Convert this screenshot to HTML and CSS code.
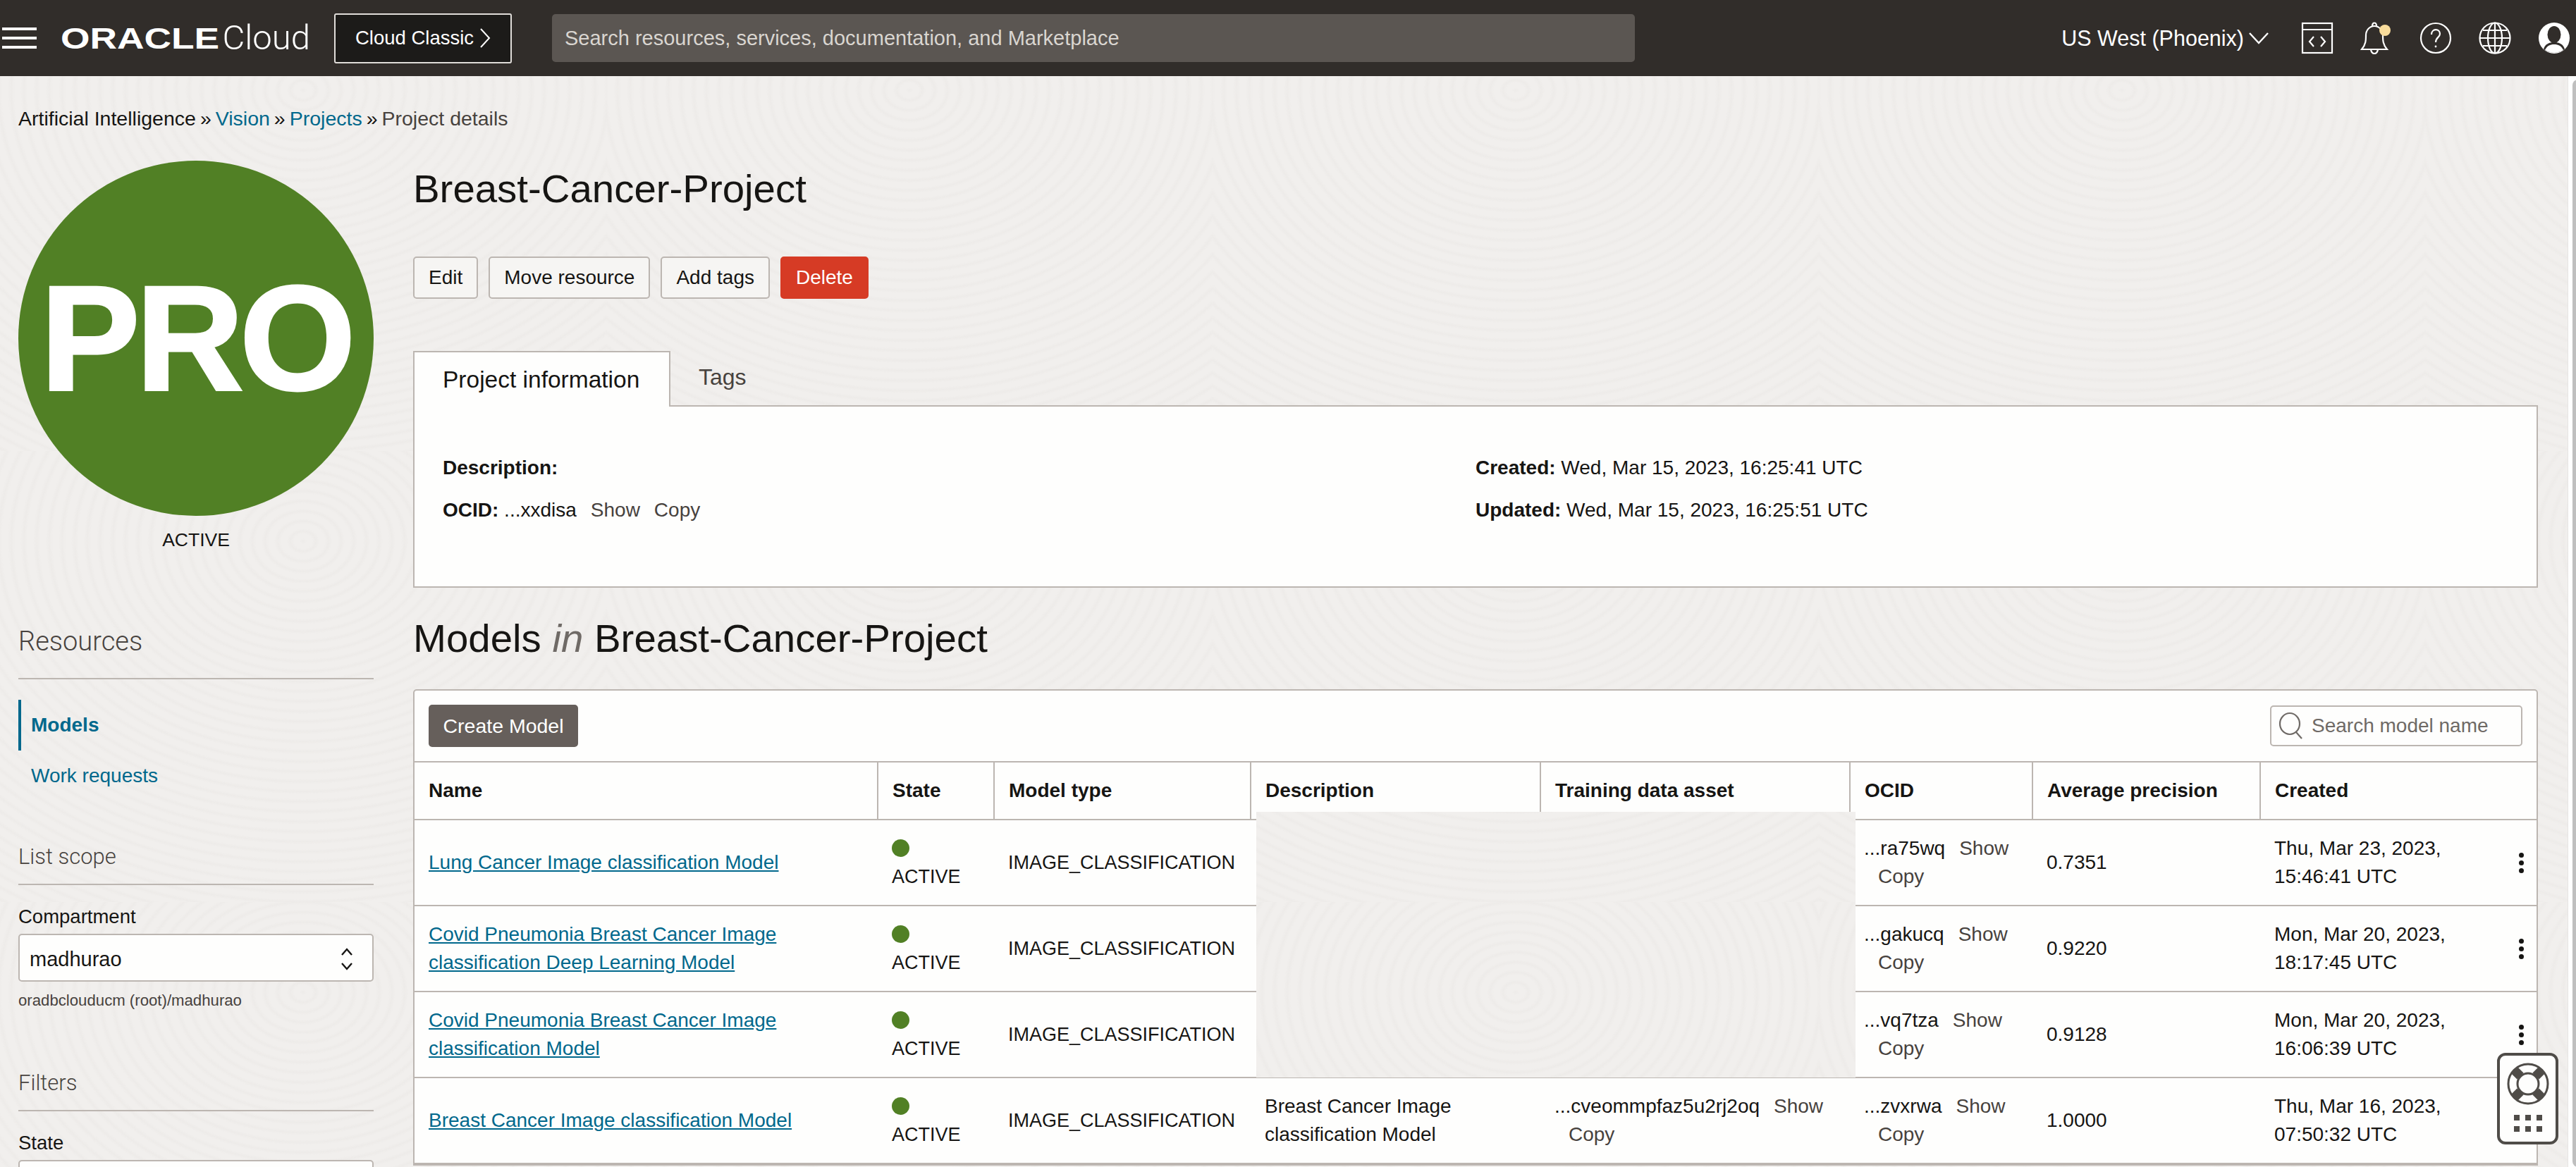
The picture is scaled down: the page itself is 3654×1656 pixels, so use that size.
FILE: index.html
```html
<!DOCTYPE html>
<html lang="en">
<head>
    <meta charset="UTF-8">
    <title>Breast-Cancer-Project | Vision</title>
    <link rel="stylesheet" href="styles.css">
</head>
<body>
    <header class="topbar">
        <div class="burger"><span></span><span></span><span></span></div>
        <div class="logo"><span class="logo-oracle">ORACLE</span><span class="logo-cloud">Cloud</span></div>
        <a class="classic">Cloud Classic
            <svg width="16" height="30" viewBox="0 0 16 30"><path d="M2 2l12 13L2 28" fill="none" stroke="#fff" stroke-width="2"/></svg>
        </a>
        <div class="search">Search resources, services, documentation, and Marketplace</div>
        <div class="region">US West (Phoenix)
            <svg width="30" height="18" viewBox="0 0 30 18"><path d="M2 2l13 14L28 2" fill="none" stroke="#fff" stroke-width="2.4"/></svg>
        </div>
        <div class="top-icons">
            <svg width="46" height="46" viewBox="0 0 46 46" fill="none" stroke="#fff" stroke-width="2.2"><rect x="2" y="2" width="42" height="42"/><path d="M2 11h42M18 21l-6 7 6 7M28 21l6 7-6 7"/></svg>
            <svg width="46" height="48" viewBox="0 0 46 48" fill="none" stroke="#fff" stroke-width="2.2"><path d="M2 40c6-7 6-13 6-20 0-7 5-13 12-13s12 6 12 13c0 7 0 13 6 20zM17 7c0-6 6-6 6 0M15 40c1 8 9 8 10 0"/><ellipse cx="35" cy="13" rx="8" ry="8" fill="#f8dc9b" stroke="none"/></svg>
            <svg width="46" height="46" viewBox="0 0 46 46" fill="none" stroke="#fff" stroke-width="2.2"><circle cx="23" cy="23" r="21"/><path d="M17 18c0-9 12-9 12-1 0 5-6 5-6 12"/><circle cx="23" cy="35" r="1.4" fill="#fff" stroke="none"/></svg>
            <svg width="46" height="46" viewBox="0 0 46 46" fill="none" stroke="#fff" stroke-width="2.2"><circle cx="23" cy="23" r="21.5"/><ellipse cx="23" cy="23" rx="10" ry="21.5"/><path d="M23 2v42M2 23h42M6 12h34M6 34h34"/></svg>
            <svg width="46" height="46" viewBox="0 0 46 46"><circle cx="23" cy="23" r="22" fill="#fff"/><ellipse cx="23" cy="18" rx="9.5" ry="12" fill="#312d2a"/><path d="M8 39c2-8 8-9 12-10h6c4 1 10 2 12 10-8 6-22 6-30 0z" fill="#312d2a"/><path d="M10 40c3-6 7-8 13-8s10 2 13 8c-8 5-18 5-26 0z" fill="#fff"/></svg>
        </div>
    </header>

    <nav class="crumbs">
        <span class="crumb-dark">Artificial Intelligence</span><span class="sep">»</span><a>Vision</a><span class="sep">»</span><a>Projects</a><span class="sep">»</span><span>Project details</span>
    </nav>

    <div class="page">
        <aside class="side">
            <div class="avatar">PRO</div>
            <div class="avatar-state">ACTIVE</div>

            <h3 class="side-title">Resources</h3>
            <ul class="side-nav">
                <li class="active">Models</li>
                <li>Work requests</li>
            </ul>

            <h4 class="side-sub">List scope</h4>
            <label class="field-label">Compartment</label>
            <div class="select">madhurao
                <svg width="20" height="36" viewBox="0 0 20 36" fill="none" stroke="#161513" stroke-width="2.4"><path d="M3 12l7-8 7 8M3 24l7 8 7-8"/></svg>
            </div>
            <div class="field-note">oradbclouducm (root)/madhurao</div>

            <h4 class="side-sub filters">Filters</h4>
            <label class="field-label">State</label>
            <div class="select"></div>
        </aside>

        <main class="content">
            <h1 class="title">Breast-Cancer-Project</h1>
            <div class="actions">
                <button class="btn">Edit</button>
                <button class="btn">Move resource</button>
                <button class="btn">Add tags</button>
                <button class="btn btn-red">Delete</button>
            </div>

            <div class="tabs">
                <div class="tab on">Project information</div>
                <div class="tab">Tags</div>
            </div>
            <section class="info">
                <div><b>Description:</b></div>
                <div><b>Created:</b> Wed, Mar 15, 2023, 16:25:41 UTC</div>
                <div><b>OCID:</b> ...xxdisa<a class="mini">Show</a><a class="mini">Copy</a></div>
                <div><b>Updated:</b> Wed, Mar 15, 2023, 16:25:51 UTC</div>
            </section>

            <h2 class="models-title">Models <i>in</i> Breast-Cancer-Project</h2>

            <section class="models">
                <div class="toolbar">
                    <button class="btn-create">Create Model</button>
                    <div class="table-search">
                        <svg width="36" height="40" viewBox="0 0 36 40" fill="none" stroke="#6f6a66" stroke-width="2.2"><ellipse cx="16" cy="17" rx="14" ry="15"/><path d="M25 29l8 9"/></svg>
                        Search model name
                    </div>
                </div>
                <table>
                    <colgroup>
                        <col class="c-name"><col class="c-state"><col class="c-type"><col class="c-desc"><col class="c-asset"><col class="c-ocid"><col class="c-prec"><col class="c-date">
                    </colgroup>
                    <thead>
                        <tr><th>Name</th><th>State</th><th>Model type</th><th>Description</th><th>Training data asset</th><th>OCID</th><th>Average precision</th><th>Created</th></tr>
                    </thead>
                    <tbody>
                        <tr>
                            <td><a class="link">Lung Cancer Image classification Model</a></td>
                            <td class="caps"><span class="dot"></span><br>ACTIVE</td>
                            <td class="caps">IMAGE_CLASSIFICATION</td>
                            <td></td><td></td>
                            <td>...ra75wq<a class="mini">Show</a> <a class="mini">Copy</a></td>
                            <td>0.7351</td>
                            <td><div class="date-cell"><span>Thu, Mar 23, 2023,<br>15:46:41 UTC</span><span class="kebab"><i></i><i></i><i></i></span></div></td>
                        </tr>
                        <tr>
                            <td><a class="link">Covid Pneumonia Breast Cancer Image<br>classification Deep Learning Model</a></td>
                            <td class="caps"><span class="dot"></span><br>ACTIVE</td>
                            <td class="caps">IMAGE_CLASSIFICATION</td>
                            <td></td><td></td>
                            <td>...gakucq<a class="mini">Show</a> <a class="mini">Copy</a></td>
                            <td>0.9220</td>
                            <td><div class="date-cell"><span>Mon, Mar 20, 2023,<br>18:17:45 UTC</span><span class="kebab"><i></i><i></i><i></i></span></div></td>
                        </tr>
                        <tr>
                            <td><a class="link">Covid Pneumonia Breast Cancer Image<br>classification Model</a></td>
                            <td class="caps"><span class="dot"></span><br>ACTIVE</td>
                            <td class="caps">IMAGE_CLASSIFICATION</td>
                            <td></td><td></td>
                            <td>...vq7tza<a class="mini">Show</a> <a class="mini">Copy</a></td>
                            <td>0.9128</td>
                            <td><div class="date-cell"><span>Mon, Mar 20, 2023,<br>16:06:39 UTC</span><span class="kebab"><i></i><i></i><i></i></span></div></td>
                        </tr>
                        <tr>
                            <td><a class="link">Breast Cancer Image classification Model</a></td>
                            <td class="caps"><span class="dot"></span><br>ACTIVE</td>
                            <td class="caps">IMAGE_CLASSIFICATION</td>
                            <td>Breast Cancer Image<br>classification Model</td>
                            <td>...cveommpfaz5u2rj2oq<a class="mini">Show</a> <a class="mini">Copy</a></td>
                            <td>...zvxrwa<a class="mini">Show</a> <a class="mini">Copy</a></td>
                            <td>1.0000</td>
                            <td><div class="date-cell"><span>Thu, Mar 16, 2023,<br>07:50:32 UTC</span></div></td>
                        </tr>
                    </tbody>
                </table>
                <div class="blanked"></div>
            </section>
        </main>
    </div>

    <div class="help">
        <svg width="62" height="62" viewBox="0 0 62 62" fill="none" stroke="#4f4c48">
            <circle cx="31" cy="31" r="28" stroke-width="3"/>
            <path d="M20 20L11 11M42 20l9-9M20 42l-9 9M42 42l9 9" stroke-width="13"/>
            <circle cx="31" cy="31" r="15" fill="#fefefd" stroke-width="3"/>
        </svg>
        <div class="help-grid"><i></i><i></i><i></i><i></i><i></i><i></i></div>
    </div>
    <div class="scroll-track"><div class="scroll-thumb"></div></div>
</body>
</html>
```

FILE: styles.css
```css
:root {
    --texture: repeating-radial-gradient(ellipse 380px 300px at 50% 20%, rgba(110, 100, 90, 0.022) 0, transparent 5px, transparent 13px, rgba(110, 100, 90, 0.022) 18px);
}

* {
    box-sizing: border-box;
}

html, body {
    height: 100%;
}

body {
    margin: 0;
    height: 1656px;
    overflow: hidden;
    position: relative;
    color: #161513;
    font-family: "Liberation Sans", Arial, sans-serif;
    font-size: 28px;
    line-height: 40px;
    background-color: #f1efed;
    background-image: var(--texture);
    background-size: 860px 640px;
    background-attachment: fixed;
}

a {
    color: #00688c;
}

/* top bar */
.topbar {
    height: 108px;
    background: #312d2a;
    color: #fff;
    display: flex;
    align-items: center;
    padding: 0 8px 0 3px;
}

.burger {
    width: 49px;
    display: flex;
    flex-direction: column;
    gap: 9px;
}

.burger span {
    height: 4px;
    background: #fff;
}

.logo {
    margin-left: 34px;
    width: 354px;
    display: flex;
    align-items: center;
    white-space: nowrap;
}

.logo-oracle {
    font-size: 43px;
    font-weight: bold;
    line-height: 44px;
    width: 233px;
    transform: scaleX(1.24);
    transform-origin: left center;
}

.logo-cloud {
    font-family: Roboto, "Liberation Sans", sans-serif;
    font-weight: 300;
    font-size: 49px;
}

.classic {
    width: 252px;
    height: 71px;
    margin-left: 34px;
    background: #1c1b19;
    border: 2px solid #e0ddd9;
    border-radius: 3px;
    color: #fff;
    font-size: 27.5px;
    display: flex;
    align-items: center;
    justify-content: center;
    gap: 8px;
}

.search {
    width: 1536px;
    height: 68px;
    margin-left: 57px;
    padding-left: 18px;
    background: #5b5652;
    border-radius: 5px;
    color: #d9d5d0;
    font-size: 29px;
    line-height: 68px;
}

.region {
    margin-left: auto;
    font-size: 30.5px;
    display: flex;
    align-items: center;
    gap: 6px;
}

.top-icons {
    margin-left: 45px;
    display: flex;
    align-items: center;
    gap: 38px;
}

.top-icons svg {
    display: block;
}

/* breadcrumb */
.crumbs {
    padding: 40px 0 0 26px;
    height: 120px;
    color: #47423e;
    font-size: 28.5px;
}

.crumb-dark {
    color: #161513;
}

.sep {
    margin: 0 6px;
    color: #161513;
}

/* columns */
.page {
    display: flex;
    gap: 56px;
    padding: 0 54px 0 26px;
}

.side {
    width: 504px;
    flex: none;
}

.avatar {
    width: 504px;
    height: 504px;
    border-radius: 50%;
    background: #518025;
    color: #fff;
    font-size: 212px;
    font-weight: bold;
    letter-spacing: -6px;
    line-height: 504px;
    text-align: center;
    -webkit-text-stroke: 3px #fff;
}

.avatar-state {
    margin-top: 14px;
    text-align: center;
    font-size: 26.5px;
}

.side-title {
    margin: 99px 0 0;
    height: 79px;
    border-bottom: 2px solid #bcb6b1;
    font-family: Roboto, "Liberation Sans", sans-serif;
    font-size: 38px;
    font-weight: 300;
    line-height: 50px;
    color: #47423e;
}

.side-nav {
    list-style: none;
    margin: 29px 0 0;
    padding: 0;
}

.side-nav li {
    height: 72px;
    padding-left: 18px;
    line-height: 72px;
    font-size: 28px;
    color: #00688c;
}

.side-nav .active {
    border-left: 4px solid #00688c;
    padding-left: 14px;
    font-weight: bold;
}

.side-sub {
    margin: 57px 0 0;
    height: 62px;
    border-bottom: 2px solid #bcb6b1;
    font-family: Roboto, "Liberation Sans", sans-serif;
    font-size: 31px;
    font-weight: 300;
    line-height: 44px;
    color: #47423e;
}

.side-sub.filters {
    margin-top: 80px;
}

.field-label {
    display: block;
    margin-top: 25px;
    font-size: 27.5px;
}

.select {
    height: 68px;
    margin-top: 4px;
    padding: 3px 26px 0 14px;
    background: #fefefd;
    border: 2px solid #bcb6b1;
    border-radius: 5px;
    display: flex;
    align-items: center;
    justify-content: space-between;
    font-size: 29px;
}

.field-note {
    margin-top: 12px;
    font-size: 22.2px;
    line-height: 30px;
    color: #47423e;
}

/* main column */
.content {
    flex: 1;
    min-width: 0;
}

.title {
    margin: 0;
    font-size: 56.4px;
    font-weight: normal;
    line-height: 80px;
}

.actions {
    margin-top: 56px;
    display: flex;
    gap: 15px;
}

.btn {
    height: 60px;
    padding: 0 20px;
    background: #f6f5f3;
    border: 2px solid #bcb6b1;
    border-radius: 5px;
    color: #161513;
    font-family: inherit;
    font-size: 28px;
}

.btn-red {
    background: #d63b25;
    border-color: #d63b25;
    color: #fff;
}

.tabs {
    margin-top: 74px;
    height: 79px;
    display: flex;
}

.tab {
    padding: 0 40px;
    font-size: 32px;
    line-height: 74px;
    color: #47423e;
    border-bottom: 2px solid #bcb6b1;
}

.tab.on {
    width: 365px;
    padding-top: 2px;
    background: #fefefd;
    border: 2px solid #bcb6b1;
    border-bottom: 0;
    color: #161513;
    font-size: 33.5px;
    white-space: nowrap;
}

.tabs .tab:last-child {
    flex: 1;
}

.info {
    height: 257px;
    padding: 67px 40px 0;
    background: #fefefd;
    border: 2px solid #bcb6b1;
    border-top: 0;
    display: grid;
    grid-template-columns: 1465px 1fr;
    grid-auto-rows: 40px;
    row-gap: 20px;
}

.mini {
    margin-left: 20px;
    color: #47423e;
}

.models-title {
    margin: 37px 0 0;
    font-size: 56.4px;
    font-weight: normal;
    line-height: 70px;
}

.models-title i {
    color: #6f6a66;
}

.models {
    position: relative;
    margin-top: 37px;
    background: #fefefd;
    border: 2px solid #bcb6b1;
    border-radius: 5px 5px 0 0;
}

.toolbar {
    height: 100px;
    padding: 0 20px;
    display: flex;
    align-items: center;
    justify-content: space-between;
}

.btn-create {
    width: 212px;
    height: 60px;
    background: #665f5b;
    border: 0;
    border-radius: 5px;
    color: #fff;
    font-family: inherit;
    font-size: 28.5px;
}

.table-search {
    width: 358px;
    height: 58px;
    padding-left: 10px;
    background: #fefefd;
    border: 2px solid #bcb6b1;
    border-radius: 5px;
    color: #6f6a66;
    font-size: 28px;
    display: flex;
    align-items: center;
    gap: 11px;
}

table {
    width: 3010px;
    table-layout: fixed;
    border-collapse: collapse;
}

.c-name { width: 657px; }
.c-state { width: 165px; }
.c-type { width: 364px; }
.c-desc { width: 411px; }
.c-asset { width: 439px; }
.c-ocid { width: 259px; }
.c-prec { width: 323px; }
.c-date { width: 392px; }

th {
    height: 82px;
    padding: 0 20px;
    text-align: left;
    border: 2px solid #bcb6b1;
}

th:first-child {
    border-left: 0;
}

th:last-child {
    border-right: 0;
}

td {
    height: 122px;
    padding: 0 20px;
    border-bottom: 2px solid #bcb6b1;
}

.caps {
    font-size: 27px;
}

.link {
    text-decoration: underline;
}

.dot {
    display: inline-block;
    width: 25px;
    height: 25px;
    border-radius: 50%;
    background: #518025;
    vertical-align: -3px;
}

.date-cell {
    display: flex;
    align-items: center;
    justify-content: space-between;
}

.kebab {
    display: flex;
    flex-direction: column;
    gap: 4px;
    margin-right: -2px;
}

.kebab i {
    width: 7px;
    height: 7px;
    border-radius: 50%;
    background: #161513;
}

.blanked {
    position: absolute;
    left: 1194px;
    top: 172px;
    width: 850px;
    height: 377px;
    background-color: #f1efed;
    background-image: var(--texture);
    background-size: 860px 640px;
    background-attachment: fixed;
}

/* floating bits */
.help {
    position: absolute;
    left: 3542px;
    top: 1494px;
    width: 87px;
    height: 130px;
    padding-top: 9px;
    background: #fefefd;
    border: 4px solid #4f4c48;
    border-radius: 12px;
    display: flex;
    flex-direction: column;
    align-items: center;
    gap: 13px;
}

.help-grid {
    display: grid;
    grid-template-columns: repeat(3, 8px);
    gap: 8px;
}

.help-grid i {
    height: 8px;
    background: #4f4c48;
}

.scroll-track {
    position: absolute;
    left: 3642px;
    top: 108px;
    width: 12px;
    height: 1548px;
    padding: 5px 0 0 6px;
    background: #fff;
    border-left: 1px solid #e6e4e2;
}

.scroll-thumb {
    width: 12px;
    height: 100%;
    background: #bfbfbf;
    border-radius: 8px 0 0 8px;
}
```
